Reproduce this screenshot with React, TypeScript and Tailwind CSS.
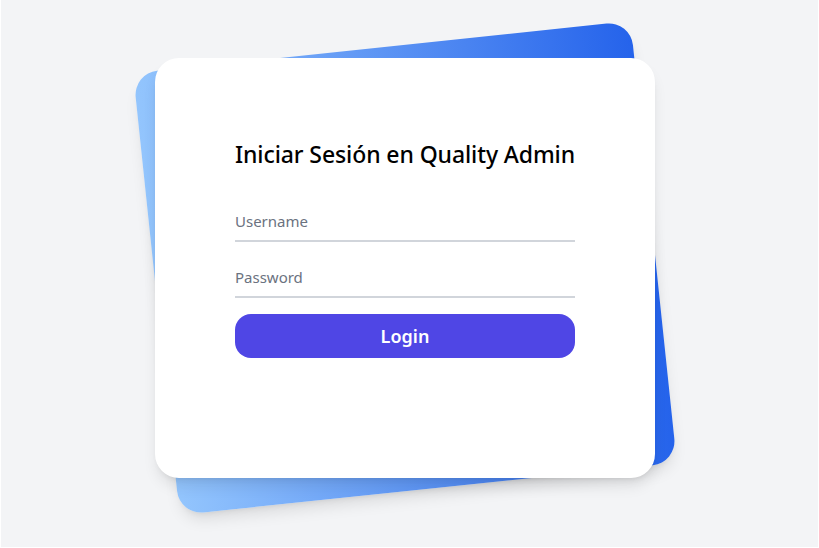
import React from "react";

export default function App() {
  return (
    <div className="h-[548px] w-full bg-white" style={{ fontFamily: '"Noto Sans", "Open Sans", sans-serif' }}>
      <div className="ml-px mr-px h-[547px] bg-[#f3f4f6] flex flex-col justify-center pb-3 pr-[9px]">
        <div className="relative py-3 w-[500px] mx-auto">
          <div className="absolute inset-0 rounded-3xl -rotate-6 shadow-lg bg-linear-to-r/srgb from-[#93c5fd] to-[#2563eb]" />
          <div className="relative h-[420px] bg-white rounded-3xl shadow-lg p-20">
            <div className="w-[340px]">
              <h1 className="text-[23px] leading-8 font-medium text-black whitespace-nowrap tracking-[-0.1px]">Iniciar Sesión en Quality Admin</h1>
              <div className="pt-8 space-y-4">
                <input
                  type="text"
                  placeholder="Username"
                  className="block h-10 w-full border-b-2 border-[#d1d5db] text-gray-900 placeholder-[#6b7280] text-[15px] outline-none bg-transparent"
                />
                <input
                  type="password"
                  placeholder="Password"
                  className="block h-10 w-full border-b-2 border-[#d1d5db] text-gray-900 placeholder-[#6b7280] text-[15px] outline-none bg-transparent"
                />
                <button className="block w-full h-11 rounded-2xl bg-[#4f46e5] text-white text-lg font-semibold">
                  Login
                </button>
              </div>
            </div>
          </div>
        </div>
      </div>
    </div>
  );
}
